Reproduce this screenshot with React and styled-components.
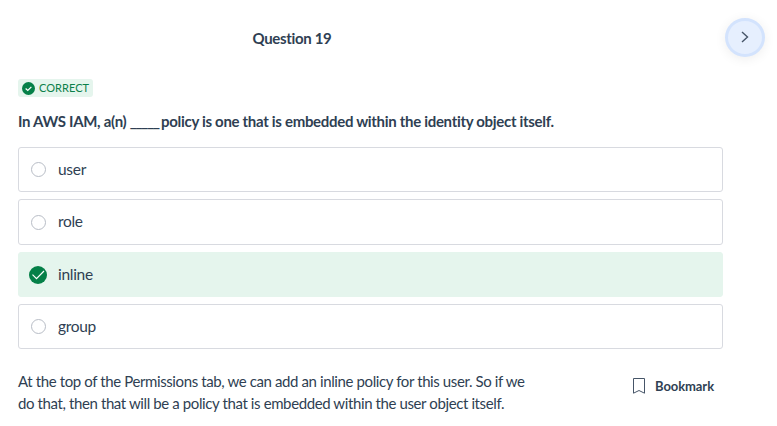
import React from "react";
import styled, { createGlobalStyle } from "styled-components";

const Global = createGlobalStyle`
  *{box-sizing:border-box}
  body{margin:0;background:#fff;color:#2f3f53;font-family:Lato,sans-serif;font-size:15px;overflow:hidden}
`;
const Page = styled.main`width:777px;height:426px;padding:18px 12px 0 18px;display:flex;flex-direction:column;`;
const Header = styled.header`display:flex;justify-content:space-between;height:39px;`;
const Title = styled.h1`margin:0 0 0 234.5px;font-size:15px;line-height:40px;font-weight:700;letter-spacing:-.34px;`;
const Next = styled.button`width:40px;height:39px;padding:0 0 1px;border:3px solid #d3e3fd;border-radius:50%;background:#e6effe;box-shadow:0 2px 12px rgba(0,0,0,.07);display:grid;place-items:center;flex:none;`;
const Body = styled.section`width:705px;margin-top:22px;display:flex;flex-direction:column;`;
const Badge = styled.div`width:75px;height:18px;padding-left:4px;display:flex;align-items:center;gap:4px;background:#e5f5ed;color:#0b8049;font-size:11px;line-height:18px;border-radius:3px;white-space:nowrap;`;
const BadgeLabel = styled.span`height:18px;letter-spacing:.04px;`;
const Prompt = styled.h2`margin:14px 0 15px;font-size:15px;line-height:20px;height:21px;font-weight:700;letter-spacing:-.31px;white-space:nowrap;`;
const Blank = styled.span`letter-spacing:-1.2px;margin-right:-1px;`;
const Options = styled.div`display:grid;grid-template-rows:45px 46px 45px 45px;row-gap:7px;`;
const Option = styled.div`border:1px solid ${p=>p.$correct?"#e5f5ed":"#d8dae0"};background:${p=>p.$correct?"#e5f5ed":"#fff"};border-radius:3px;display:flex;align-items:center;gap:11px;padding-left:10px;`;
const OptionLabel = styled.span`font-size:15.5px;letter-spacing:-.3px;line-height:20px;padding-bottom:2px;`;
const Radio = styled.span`width:15px;height:15px;margin:0 1px 0 2px;border:1px solid #b8bdc6;border-radius:50%;background:#fff;`;
const Footer = styled.footer`display:flex;justify-content:space-between;margin-top:21px;`;
const Explanation = styled.p`width:530px;margin:0;font-size:15px;line-height:22px;letter-spacing:-.39px;`;
const Bookmark = styled.button`border:0;background:none;color:inherit;padding:0;margin:6px 9px 0 0;height:20px;display:flex;align-items:center;gap:10px;font:700 13px Lato,sans-serif;letter-spacing:-.08px;`;
const Check = ({size}) => <svg width={size} height={size} viewBox="0 0 18 18"><circle cx="9" cy="9" r="9" fill="#058048"/><path d={size===18?"m3.5 8.7 4 4L15 5":"m5 9 3 2.7 5-5"} fill="none" stroke="#fff" strokeWidth={size===18?1.2:1.7}/></svg>;

export default function App(){
 return <><Global/><Page>
  <Header><Title>Question 19</Title><Next aria-label="Next question"><svg width="14" height="14" viewBox="0 0 14 14"><path d="m4 2 5.5 5L4 12" fill="none" stroke="#465568" strokeWidth="1.4"/></svg></Next></Header>
  <Body><Badge><Check size={13}/><BadgeLabel>CORRECT</BadgeLabel></Badge>
  <Prompt>In AWS IAM, a(n) <Blank>_____</Blank> policy is one that is embedded within the identity object itself.</Prompt>
  <Options>{["user","role","inline","group"].map(t=><Option key={t} $correct={t==="inline"}>{t==="inline"?<Check size={18}/>:<Radio/>}<OptionLabel>{t}</OptionLabel></Option>)}</Options>
  <Footer><Explanation>At the top of the Permissions tab, we can add an inline policy for this user. So if we<br/>do that, then that will be a policy that is embedded within the user object itself.</Explanation>
  <Bookmark><svg width="12" height="16" viewBox="0 0 12 16"><path d="M.5.5h11v14.7L6 12.5.5 15.2z" fill="none" stroke="#465568"/></svg>Bookmark</Bookmark></Footer>
  </Body></Page></>;
}
